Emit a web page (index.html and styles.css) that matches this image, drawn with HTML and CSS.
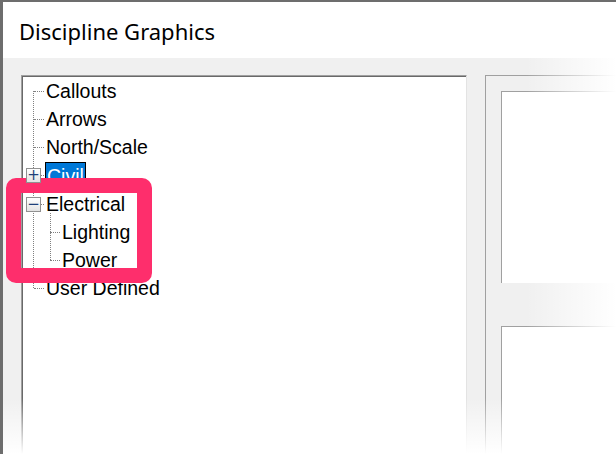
FILE: index.html
```html
<!DOCTYPE html>
<html lang="en">
<head>
    <meta charset="UTF-8">
    <title>Discipline Graphics</title>
    <link rel="stylesheet" href="styles.css">
</head>
<body>
    <div class="window">
        <div class="header">
            <h1>Discipline Graphics</h1>
        </div>

        <div class="content">
            <div class="tree">
                <ul class="nodes">
                    <li class="node"><span class="label">Callouts</span></li>
                    <li class="node"><span class="label">Arrows</span></li>
                    <li class="node"><span class="label">North/Scale</span></li>
                    <li class="node">
                        <span class="expander">+</span>
                        <span class="label selected">Civil</span>
                    </li>
                    <li class="node">
                        <span class="expander">&minus;</span>
                        <span class="label">Electrical</span>
                        <ul class="nodes children">
                            <li class="node"><span class="label">Lighting</span></li>
                            <li class="node"><span class="label">Power</span></li>
                        </ul>
                    </li>
                    <li class="node"><span class="label">User Defined</span></li>
                </ul>
            </div>

            <div class="side">
                <div class="panel"></div>
                <div class="panel"></div>
            </div>
        </div>

        <!-- callout around the Electrical group -->
        <div class="highlight"></div>

        <div class="fade-right"></div>
        <div class="fade-bottom"></div>
    </div>
</body>
</html>
```

FILE: styles.css
```css
body {
    margin: 0;
    width: 616px;
    height: 454px;
    overflow: hidden;
    background: #fff;
}
.window {
    position: relative;
    height: 100%;
    overflow: hidden;
    border-left: 3px solid #6d6d6d;
    border-top: 2px solid #6d6d6d;
    display: flex;
    flex-direction: column;
    box-sizing: border-box;
}
.header {
    flex-shrink: 0;
    height: 56px;
    background: #fff;
    display: flex;
    align-items: center;
    padding-left: 16px;
}
h1 {
    margin: 0;
    font-family: "Noto Sans", sans-serif;
    font-weight: normal;
    font-size: 22px;
    color: #000;
    padding-top: 2px;
}
.content {
    flex: 1;
    min-height: 0;
    background: #f0f0f0;
    display: flex;
    gap: 18px;
    padding: 17px 0 0 18px;
}

/* tree view */
.tree {
    width: 446px;
    height: 400px;
    flex-shrink: 0;
    box-sizing: border-box;
    background: #fff;
    border: 1px solid;
    border-color: #a0a0a0 #e3e3e3 #e3e3e3 #a0a0a0;
    box-shadow: inset 1px 1px 0 #696969;
    padding: 1px 0 0 1px;
    font-family: "Liberation Sans", Arial, sans-serif;
    font-size: 19.5px;
}
.nodes {
    position: relative;
    list-style: none;
    margin: 0;
    padding: 0 0 0 22px;
}
.nodes::before {
    content: "";
    position: absolute;
    left: 10px;
    top: 14px;
    bottom: 14px;
    border-left: 1px dotted #808080;
}
.node {
    position: relative;
}
.node::before {
    content: "";
    position: absolute;
    left: -11px;
    top: 14px;
    width: 10px;
    border-top: 1px dotted #808080;
}
.label {
    display: inline-block;
    height: 28px;
    line-height: 28px;
    padding: 0 1px;
    color: #000;
}
.label.selected {
    background: #0078d7;
    color: #fff;
    height: 26px;
    line-height: 26px;
    border: 1px dotted #ff9a2a;
    outline: 1px solid #000;
    outline-offset: -1px;
    margin-top: 1px;
}
.children {
    padding-left: 16px;
}
.children::before {
    left: 5px;
    top: -5px;
}
.expander {
    position: absolute;
    z-index: 1;
    left: -19px;
    top: 7px;
    width: 13px;
    height: 13px;
    border: 1px solid #919191;
    background: linear-gradient(#fff, #e3e3e3);
    color: #1f3f7a;
    font-size: 15px;
    line-height: 12px;
    text-align: center;
    font-family: "DejaVu Sans", sans-serif;
}

/* right hand group */
.side {
    flex: 1;
    border-left: 1px solid #a0a0a0;
    border-top: 1px solid #a0a0a0;
    padding: 15px 0 0 15px;
    display: flex;
    flex-direction: column;
    gap: 43px;
}
.panel {
    height: 191px;
    flex-shrink: 0;
    background: #fff;
    border-left: 1px solid #a0a0a0;
    border-top: 1px solid #a0a0a0;
}

.highlight {
    position: absolute;
    left: 3px;
    top: 176px;
    width: 116px;
    height: 75px;
    border: 15px solid #fe2e6c;
    border-radius: 10px;
}
.fade-right {
    position: absolute;
    top: -2px;
    right: 0;
    width: 90px;
    height: 456px;
    background: linear-gradient(to right, rgba(255, 255, 255, 0), #fff);
}
.fade-bottom {
    position: absolute;
    left: -3px;
    right: 0;
    bottom: 0;
    height: 56px;
    background: linear-gradient(rgba(255, 255, 255, 0), #fff);
}
```
